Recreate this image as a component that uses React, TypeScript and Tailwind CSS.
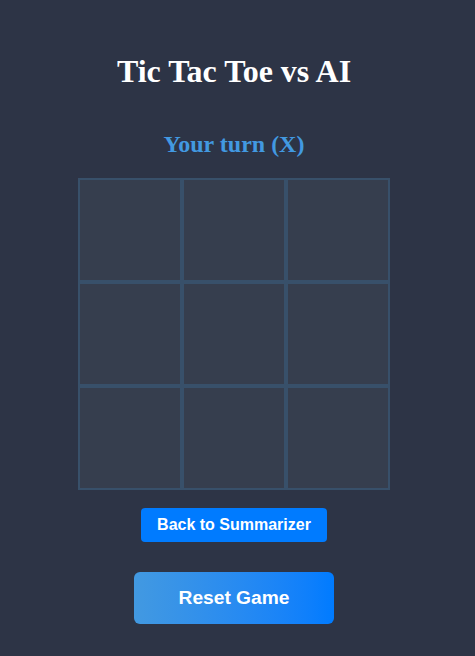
export default function App() {
  const cells = Array.from({ length: 9 });

  return (
    <div className="min-h-[656px] w-full bg-[#2d3446] pr-[7px]">
      <div className="flex flex-col items-center pt-[47px]">
        <h1 className="font-['Liberation_Serif',serif] text-[32px] leading-[48px] font-bold text-white">
          Tic Tac Toe vs AI
        </h1>
        <h2 className="mt-[31px] font-['Liberation_Serif',serif] text-[24px] leading-[36px] font-bold text-[#4299e1]">
          Your turn (X)
        </h2>
        <div className="mt-[16px] grid grid-cols-[repeat(3,104px)] grid-rows-[repeat(3,104px)]">
          {cells.map((_, i) => (
            <div
              key={i}
              className="border-2 border-[#38506a] bg-[#363e4e]"
            />
          ))}
        </div>
        <button className="mt-[18px] flex h-[34px] w-[186px] items-center justify-center rounded-[4px] bg-[#007bff] font-['Liberation_Sans',Arial,sans-serif] text-[16px] font-bold text-white">
          Back to Summarizer
        </button>
        <button className="mt-[30px] flex h-[52px] w-[200px] items-center justify-center rounded-[6px] bg-gradient-to-r from-[#4299e1] to-[#007bff] font-['Liberation_Sans',Arial,sans-serif] text-[19.2px] font-bold text-white">
          Reset Game
        </button>
      </div>
    </div>
  );
}
